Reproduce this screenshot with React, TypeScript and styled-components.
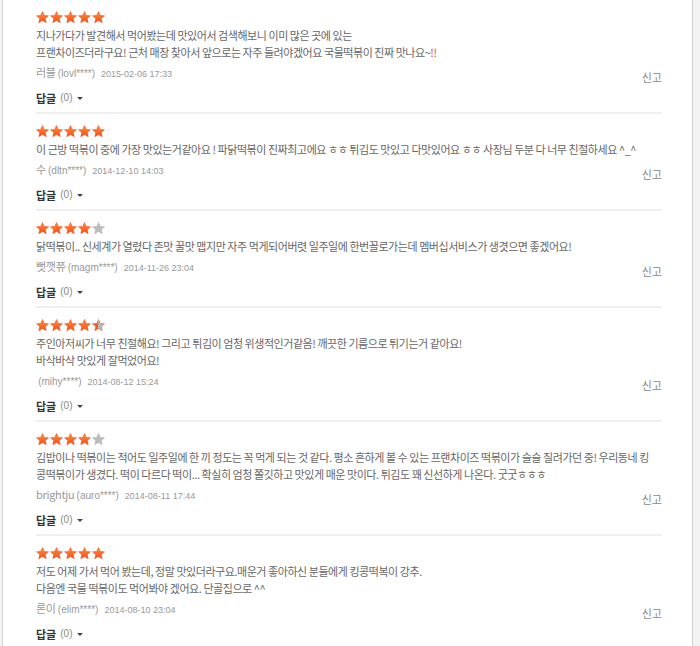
import React from "react";
import styled, { createGlobalStyle } from "styled-components";

const GlobalStyle = createGlobalStyle`
  html, body {
    margin: 0;
    padding: 0;
    background: #f3f3f3;
  }
  body {
    font-family: "Noto Sans CJK KR", "Liberation Sans", sans-serif;
  }
`;

const Frame = styled.div`
  margin-left: 2px;
  width: 691px;
  min-height: 646px;
  background: #fff;
  border-left: 1px solid #d6d6d6;
  border-right: 1px solid #cfcfcf;
  padding: 0 30px 0 33px;
  box-sizing: border-box;
`;

const List = styled.ul`
  list-style: none;
  margin: 0;
  padding: 0;
`;

const Item = styled.li`
  padding: 11px 0 5px;
  border-top: 2px solid #efefef;

  &:first-child {
    border-top: none;
  }
`;

const Stars = styled.div`
  display: flex;
  gap: 1px;
  height: 12px;
  margin-bottom: 4px;
`;

const Body = styled.div`
  font-size: 11px;
  line-height: 17px;
  color: #666;
  letter-spacing: -0.45px;
`;

const Line = styled.div`
  white-space: nowrap;
`;

const Bang = styled.span`
  color: #e0474c;
`;

const MetaRow = styled.div`
  display: flex;
  justify-content: space-between;
  align-items: flex-start;
  margin-top: 3px;
`;

const Meta = styled.div`
  font-size: 11px;
  line-height: 16px;
  color: #999;
  letter-spacing: -0.3px;
  white-space: pre;
`;

const Uid = styled.span`
  font-family: "Liberation Sans", sans-serif;
  font-size: 10px;
  letter-spacing: 0;
`;

const Date = styled.span`
  font-family: "Liberation Sans", sans-serif;
  font-size: 9px;
  letter-spacing: 0;
  margin-left: 6px;
  color: #999;
`;

const Report = styled.a`
  font-size: 11px;
  line-height: 16px;
  margin-top: 5px;
  color: #888;
  text-decoration: none;
`;

const Reply = styled.div`
  margin-top: 4px;
  font-size: 11px;
  line-height: 18px;
  color: #333;
  font-weight: 700;
  display: flex;
  align-items: center;
`;

const Count = styled.span`
  font-family: "Liberation Sans", sans-serif;
  font-weight: 400;
  font-size: 10px;
  color: #888;
  margin-left: 4px;
`;

const Caret = styled.span`
  margin-left: 5px;
  width: 0;
  height: 0;
  border-left: 3px solid transparent;
  border-right: 3px solid transparent;
  border-top: 3px solid #444;
`;

const STAR =
  "M6.5 0.5 L8.3 4.4 L12.5 4.8 L9.3 7.6 L10.2 11.7 L6.5 9.5 L2.8 11.7 L3.7 7.6 L0.5 4.8 L4.7 4.4 Z";

function Star({ fill, id }: { fill: number; id: string }) {
  return (
    <svg width="13" height="12" viewBox="0 0 13 12">
      <defs>
        <linearGradient id={`g${id}`} x1="0" y1="0" x2="0" y2="1">
          <stop offset="0" stopColor="#ff9040" />
          <stop offset="1" stopColor="#ff4a10" />
        </linearGradient>
        <linearGradient id={`h${id}`} x1="0" y1="0" x2="1" y2="0">
          <stop offset={fill} stopColor="#ff5a1c" />
          <stop offset={fill} stopColor="#b9b9b9" />
        </linearGradient>
      </defs>
      <path
        d={STAR}
        fill={fill === 1 ? `url(#g${id})` : fill === 0 ? "#bdbdbd" : `url(#h${id})`}
        stroke={fill === 0 ? "#aaaaaa" : "#ea4a10"}
        strokeWidth="0.5"
        strokeLinejoin="round"
      />
    </svg>
  );
}

function Rating({ value, id }: { value: number; id: number }) {
  return (
    <Stars>
      {[0, 1, 2, 3, 4].map((i) => (
        <Star key={i} id={`${id}-${i}`} fill={Math.max(0, Math.min(1, value - i))} />
      ))}
    </Stars>
  );
}

type Review = {
  rating: number;
  lines: React.ReactNode[];
  name: string;
  uid: string;
  date: string;
};

const reviews: Review[] = [
  {
    rating: 5,
    lines: [
      "지나가다가 발견해서 먹어봤는데 맛있어서 검색해보니 이미 많은 곳에 있는",
      <>
        프랜차이즈더라구요! 근처 매장 찾아서 앞으로는 자주 들려야겠어요 국물떡볶이 진짜 맛나요~<Bang>!!</Bang>
      </>,
    ],
    name: "러블",
    uid: "(lovl****)",
    date: "2015-02-06 17:33",
  },
  {
    rating: 5,
    lines: [
      "이 근방 떡볶이 중에 가장 맛있는거같아요 ! 파닭떡볶이 진짜최고에요 ㅎㅎ 튀김도 맛있고 다맛있어요 ㅎㅎ 사장님 두분 다 너무 친절하세요 ^_^",
    ],
    name: "수",
    uid: "(dltn****)",
    date: "2014-12-10 14:03",
  },
  {
    rating: 4,
    lines: [
      "닭떡볶이.. 신세계가 열렸다 존맛 꿀맛 맵지만 자주 먹게되어버렷 일주일에 한번꼴로가는데 멤버십서비스가 생겻으면 좋겠어요!",
    ],
    name: "뻣깻쮸",
    uid: "(magm****)",
    date: "2014-11-26 23:04",
  },
  {
    rating: 4.5,
    lines: [
      "주인아저씨가 너무 친절해요! 그리고 튀김이 엄청 위생적인거같음! 깨끗한 기름으로 튀기는거 같아요!",
      "바삭바삭 맛있게 잘먹었어요!",
    ],
    name: "",
    uid: "(mihy****)",
    date: "2014-08-12 15:24",
  },
  {
    rating: 4,
    lines: [
      "김밥이나 떡볶이는 적어도 일주일에 한 끼 정도는 꼭 먹게 되는 것 같다. 평소 흔하게 볼 수 있는 프랜차이즈 떡볶이가 슬슬 질려가던 중! 우리동네 킹",
      "콩떡볶이가 생겼다. 떡이 다르다 떡이... 확실히 엄청 쫄깃하고 맛있게 매운 맛이다. 튀김도 꽤 신선하게 나온다. 굿굿ㅎㅎㅎ",
    ],
    name: "brightju",
    uid: "(auro****)",
    date: "2014-08-11 17:44",
  },
  {
    rating: 5,
    lines: [
      "저도 어제 가서 먹어 봤는데, 정말 맛있더라구요.매운거 좋아하신 분들에게 킹콩떡복이 강추.",
      "다음엔 국물 떡볶이도 먹어봐야 겠어요. 단골집으로 ^^",
    ],
    name: "론이",
    uid: "(elim****)",
    date: "2014-08-10 23:04",
  },
];

export default function App() {
  return (
    <>
      <GlobalStyle />
      <Frame>
        <List>
          {reviews.map((r, idx) => (
            <Item key={idx}>
              <Rating value={r.rating} id={idx} />
              <Body>
                {r.lines.map((l, i) => (
                  <Line key={i}>{l}</Line>
                ))}
              </Body>
              <MetaRow>
                <Meta>
                  {`${r.name} `}
                  <Uid>{r.uid}</Uid>
                  <Date>{r.date}</Date>
                </Meta>
                <Report href="#">신고</Report>
              </MetaRow>
              <Reply>
                답글<Count>(0)</Count>
                <Caret />
              </Reply>
            </Item>
          ))}
        </List>
      </Frame>
    </>
  );
}
